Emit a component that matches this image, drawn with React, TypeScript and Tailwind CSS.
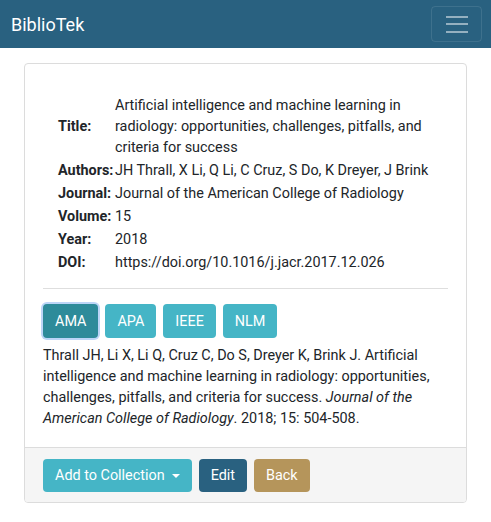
import React from 'react';

const rows: { label: string; value: string }[] = [
  { label: 'Authors:', value: 'JH Thrall, X Li, Q Li, C Cruz, S Do, K Dreyer, J Brink' },
  { label: 'Journal:', value: 'Journal of the American College of Radiology' },
  { label: 'Volume:', value: '15' },
  { label: 'Year:', value: '2018' },
  { label: 'DOI:', value: 'https://doi.org/10.1016/j.jacr.2017.12.026' },
];

const styles = ['AMA', 'APA', 'IEEE', 'NLM'];

export default function App() {
  return (
    <div className="min-h-screen bg-white text-[#212529] font-['Roboto',sans-serif] text-[14.4px] leading-[21px]">
      <nav className="h-[48px] bg-[#296180] flex items-center justify-between pl-[11px] pr-[9px]">
        <span className="text-white text-[18px] leading-[27px]">BiblioTek</span>
        <button className="w-[51px] h-[36px] border border-white/10 rounded-[4px] flex flex-col items-center justify-center gap-[5.5px]">
          <span className="block w-[22px] h-[2px] bg-white/50" />
          <span className="block w-[22px] h-[2px] bg-white/50" />
          <span className="block w-[22px] h-[2px] bg-white/50" />
        </button>
      </nav>

      <main className="px-[24px] pt-[15px]">
        <div className="border border-[#dcdcdc] rounded-[4px] overflow-hidden">
          <div className="px-[18px] pt-[31px] pb-[18px]">
            <table className="ml-[15px] border-collapse">
              <tbody>
                <tr>
                  <th className="w-[57px] text-left align-middle font-bold p-0 pb-[2px]">Title:</th>
                  <td className="p-0 pb-[2px] w-[314px]">
                    Artificial intelligence and machine learning in radiology: opportunities, challenges, pitfalls, and criteria for success
                  </td>
                </tr>
                {rows.map((r) => (
                  <tr key={r.label}>
                    <th className="text-left align-middle font-bold p-0 pb-[2px] whitespace-nowrap">{r.label}</th>
                    <td className="p-0 pb-[2px] whitespace-nowrap">{r.value}</td>
                  </tr>
                ))}
              </tbody>
            </table>

            <hr className="mt-[13px] mb-[15px] border-0 border-t border-[#dedede]" />

            <div className="flex gap-[7px]">
              {styles.map((s, i) => (
                <button
                  key={s}
                  className={
                    i === 0
                      ? 'h-[34px] px-[12px] rounded-[4px] text-white bg-[#2e8b9a] ring-2 ring-[#bcd5f7]'
                      : 'h-[34px] px-[12px] rounded-[4px] text-white bg-[#45b5c6]'
                  }
                >
                  {s}
                </button>
              ))}
            </div>

            <p className="mt-[7px]">
              Thrall JH, Li X, Li Q, Cruz C, Do S, Dreyer K, Brink J. Artificial intelligence and machine learning in
              radiology: opportunities, challenges, pitfalls, and criteria for success.{' '}
              <em>Journal of the American College of Radiology</em>. 2018; 15: 504-508.
            </p>
          </div>

          <div className="bg-[#f5f5f5] border-t border-[#dcdcdc] px-[18px] pt-[11px] pb-[10px] flex gap-[7px]">
            <button className="h-[33px] px-[12px] rounded-[4px] text-white bg-[#45b5c6] flex items-center">
              Add to Collection
              <span className="ml-[7px] w-0 h-0 border-x-[4.3px] border-x-transparent border-t-[4.3px] border-t-white" />
            </button>
            <button className="h-[33px] px-[12px] rounded-[4px] text-white bg-[#296180]">Edit</button>
            <button className="h-[33px] px-[12px] rounded-[4px] text-white bg-[#b5955b]">Back</button>
          </div>
        </div>
      </main>
    </div>
  );
}
